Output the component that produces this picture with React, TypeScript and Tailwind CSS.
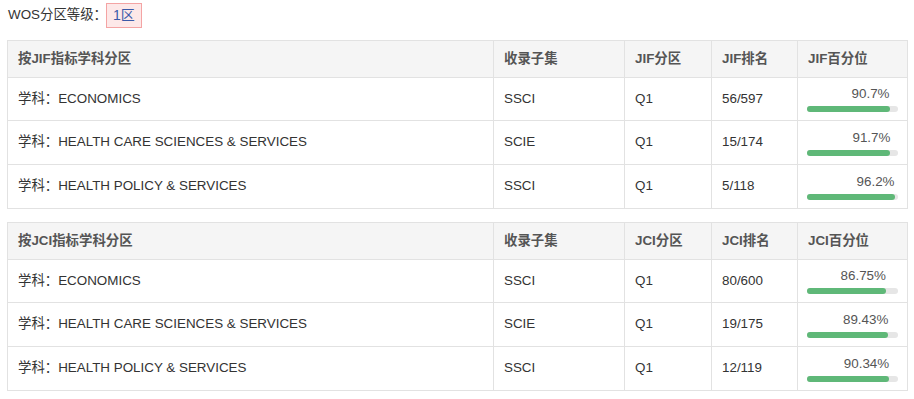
const font = { fontFamily: '"Liberation Sans", Arial, "Noto Sans CJK SC", sans-serif' }

type Row = { subject: string; set: string; q: string; rank: string; pct: number; label: string }

const jif: Row[] = [
  { subject: "ECONOMICS", set: "SSCI", q: "Q1", rank: "56/597", pct: 90.7, label: "90.7%" },
  { subject: "HEALTH CARE SCIENCES & SERVICES", set: "SCIE", q: "Q1", rank: "15/174", pct: 91.7, label: "91.7%" },
  { subject: "HEALTH POLICY & SERVICES", set: "SSCI", q: "Q1", rank: "5/118", pct: 96.2, label: "96.2%" },
]

const jci: Row[] = [
  { subject: "ECONOMICS", set: "SSCI", q: "Q1", rank: "80/600", pct: 86.75, label: "86.75%" },
  { subject: "HEALTH CARE SCIENCES & SERVICES", set: "SCIE", q: "Q1", rank: "19/175", pct: 89.43, label: "89.43%" },
  { subject: "HEALTH POLICY & SERVICES", set: "SSCI", q: "Q1", rank: "12/119", pct: 90.34, label: "90.34%" },
]

function QuartileTable({ kind, rows }: { kind: string; rows: Row[] }) {
  const th = "border border-[#e2e2e2] px-[10px] text-left font-bold text-[#555]"
  const td = "border border-[#e2e2e2] px-[10px] text-[#333]"
  return (
    <table className="w-[900px] table-fixed border-collapse text-[13.4px]">
      <colgroup>
        <col className="w-[486px]" />
        <col className="w-[131px]" />
        <col className="w-[87px]" />
        <col className="w-[86px]" />
        <col className="w-[110px]" />
      </colgroup>
      <thead>
        <tr className="h-[37px] bg-[#f5f5f5]">
          <th className={th}>按{kind}指标学科分区</th>
          <th className={th}>收录子集</th>
          <th className={th}>{kind}分区</th>
          <th className={th}>{kind}排名</th>
          <th className={th}>{kind}百分位</th>
        </tr>
      </thead>
      <tbody>
        {rows.map((r, i) => (
          <tr key={r.subject} className={i === 0 ? "h-[43px]" : "h-[44px]"}>
            <td className={td}>学科：{r.subject}</td>
            <td className={td}>{r.set}</td>
            <td className={td}>{r.q}</td>
            <td className={td}>{r.rank}</td>
            <td className="border border-[#e2e2e2] px-[9px]">
              <div style={{ width: `${r.pct}%` }} className="text-right leading-[16px] text-[#555]">
                {r.label}
              </div>
              <div className="mt-[4px] h-[6px] w-full rounded-full bg-[#e6e6e6]">
                <div style={{ width: `${r.pct}%` }} className="h-full rounded-full bg-[#5fb878]" />
              </div>
            </td>
          </tr>
        ))}
      </tbody>
    </table>
  )
}

export default function App() {
  return (
    <div style={font} className="min-h-[399px] w-[914px] bg-white pl-[7px] pt-[3px] text-[13.4px] text-[#333]">
      <div className="flex items-center">
        <span className="ml-px">WOS分区等级：</span>
        <span className="-ml-[1px] flex h-[25px] items-center border border-[#f4a4a4] bg-[#fde8e8] px-[6px] text-[14px] text-[#3a5aa8]">
          1区
        </span>
      </div>
      <div className="mt-[12px] flex flex-col gap-[13px]">
        <QuartileTable kind="JIF" rows={jif} />
        <QuartileTable kind="JCI" rows={jci} />
      </div>
    </div>
  )
}
